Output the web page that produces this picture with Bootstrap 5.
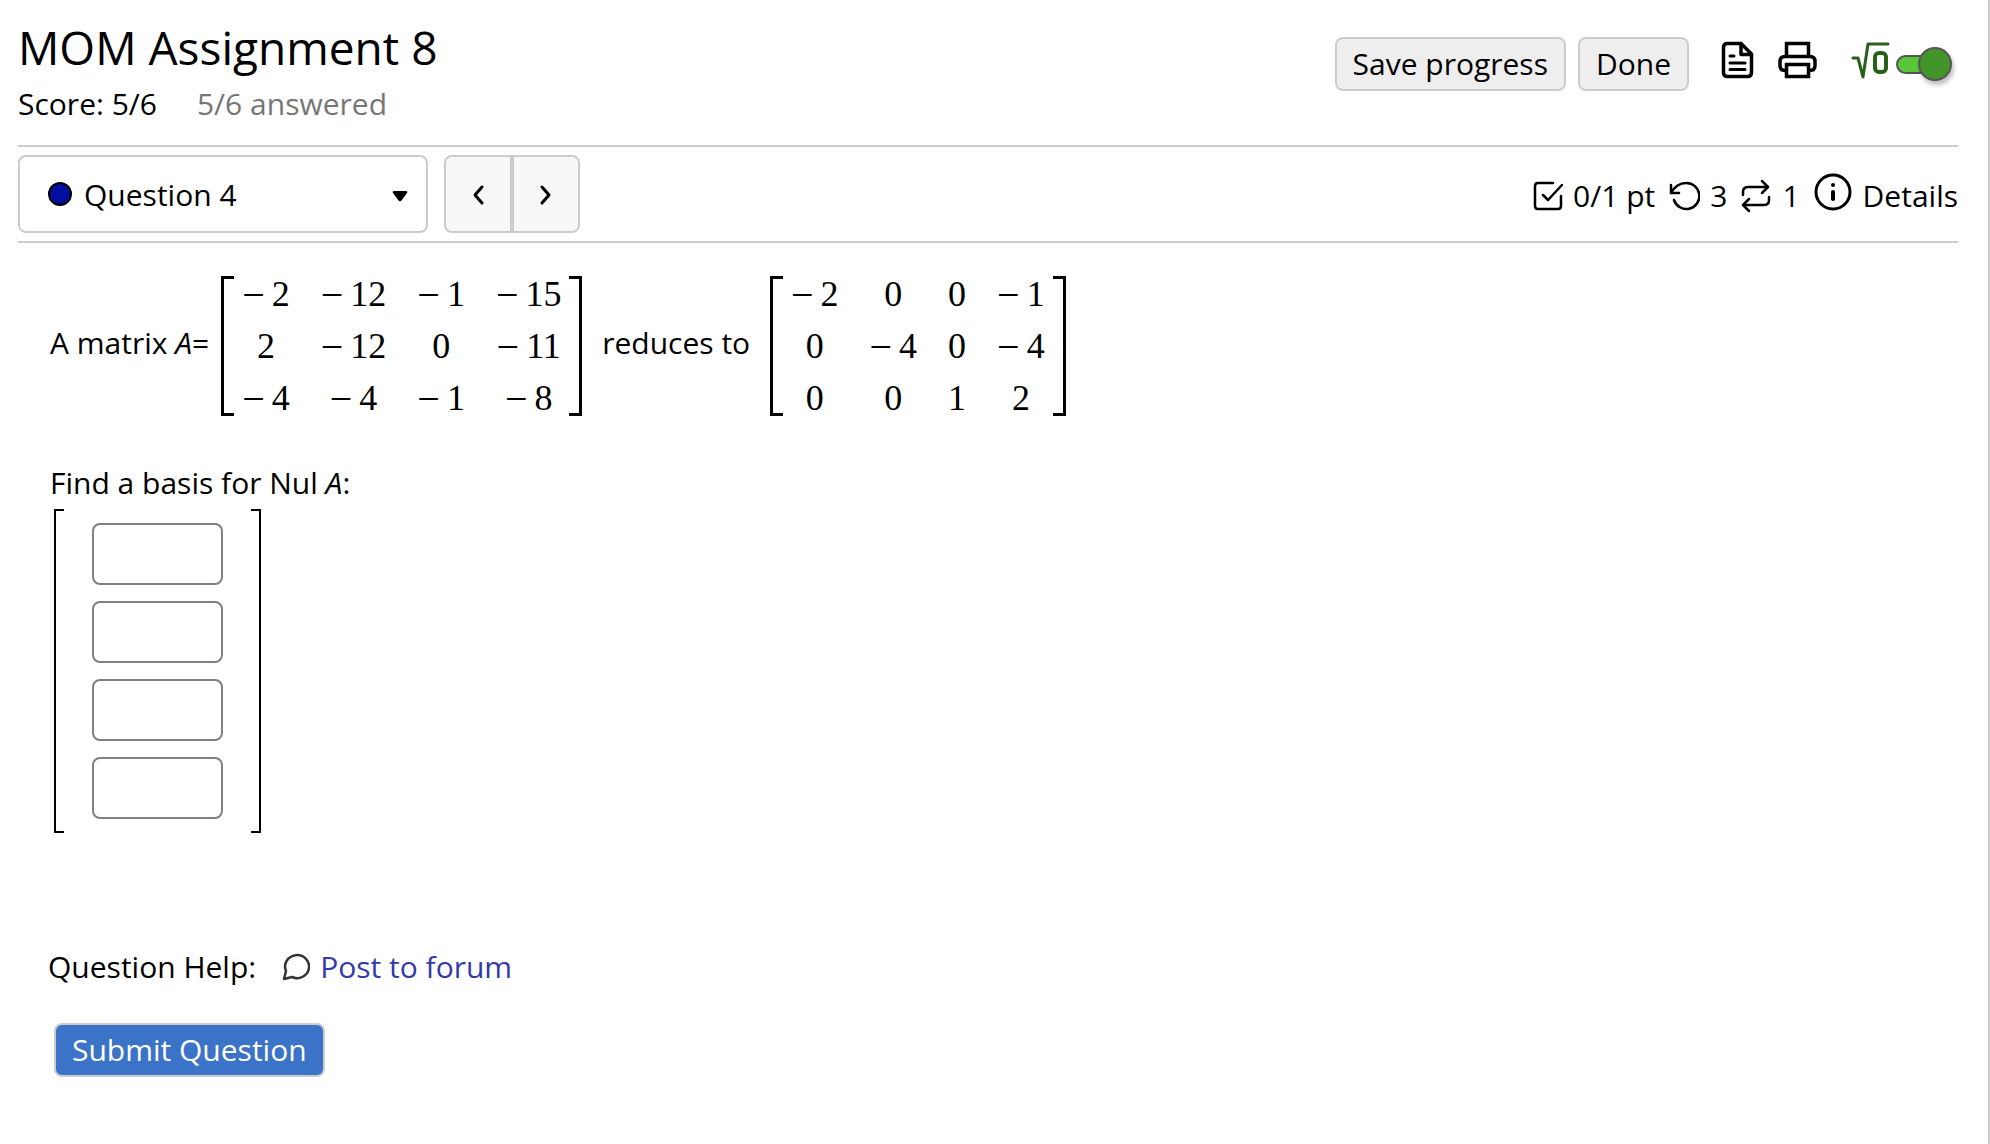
<!DOCTYPE html>
<html lang="en">
<head>
<meta charset="utf-8">
<meta name="viewport" content="width=device-width, initial-scale=1">
<title>MOM Assignment 8</title>
<link href="https://cdn.jsdelivr.net/npm/bootstrap@5.3.0/dist/css/bootstrap.min.css" rel="stylesheet">
<style>
  body { font-family: "Open Sans", "Noto Sans", sans-serif; font-size: 30px; line-height: 40px; color: #000; background: #fff; }
  .page { border-right: 2px solid #ccc; padding: 15px 30px 0 18px; }
  .page-title { font-size: 46px; line-height: 64px; }
  .rule-bottom { border-bottom: 2px solid #ccc; }
  .head { padding-bottom: 21px; }
  .head-tools { padding-top: 22px; gap: 12px; }
  .score-row { gap: 40px; margin-top: 5px; }
  .muted-count { color: #767676; }
  .action-btn { font-size: 30px; line-height: 40px; padding: 5px 16px; color: #000; background: #eee; border: 2px solid #ccc; border-radius: 8px; }
  .action-btn:hover { background: #ddd; border-color: #bbb; }
  .action-main, .action-main:hover { color: #fff; background: #3b73c9; border-color: #ccc; }
  .tool-icons { gap: 20px; margin-left: 16px; padding-bottom: 8px; }
  .math-toggle { gap: 6px; margin: 0 6px 0 13px; }
  .math-switch { appearance: none; width: 56px; height: 34px; margin: 8px 0 0; display: flex; align-items: center; }
  .math-switch::before { content: ""; width: 44px; height: 19px; border: 2px solid #555; border-radius: 10px; background: #5ac73a; }
  .math-switch::after { content: ""; width: 34px; height: 34px; margin-left: -22px; flex: none; border: 2px solid #555; border-radius: 50%; background: #43952a; box-shadow: 2px 4px 4px rgba(0,0,0,.25); }
  .nav-row { padding: 8px 0; }
  .picker { width: 410px; }
  .picker-dot { left: 30px; top: 27px; width: 24px; height: 24px; border: 2px solid #000; border-radius: 50%; background: #000f9f; pointer-events: none; }
  .picker-select { height: 78px; font-size: 30px; color: #000; padding: 0 50px 0 64px; border: 2px solid #ccc; border-radius: 8px;
    background-image: url("data:image/svg+xml,%3Csvg xmlns='http://www.w3.org/2000/svg' viewBox='0 0 16 12'%3E%3Cpath d='M2 1h12q2 0 1 2l-5.500 7.500q-1.500 1.500-3 0L1 3q-1-2 1-2z'/%3E%3C/svg%3E"); background-size: 16px 12px; background-position: right 18px top 33px; }
  .step-btn { width: 68px; height: 78px; border: 2px solid #ccc; border-radius: 8px; background: #f8f8f8; padding: 0; }
  .info-item { gap: 10px; }
  .info-row { gap: 13px; padding-top: 4px; }
  .info-icon { margin-bottom: 8px; }
  .question { padding: 33px 0 0 32px; }
  .statement { gap: 12px; }
  .statement-text { padding-bottom: 6px; }
  .bracketed { gap: 8px; }
  .bracket-open, .bracket-close { width: 13px; border: 3px solid #000; }
  .bracket-open { border-right: 0; }
  .bracket-close { border-left: 0; }
  .matrix { font-family: "Liberation Serif", serif; font-size: 36px; line-height: 52px; text-align: center; margin: -8px 0; }
  .matrix td { padding: 0 0 0 31px; white-space: nowrap; }
  .matrix td:first-child { padding-left: 0; }
  .matrix tr { height: 52px; }
  .minus { font-size: 40px; line-height: 36px; margin-right: 7px; vertical-align: -2px; }
  .prompt { margin-top: 47px; }
  .answer { gap: 28px; margin: 6px 0 0 4px; }
  .answer .bracket-open, .answer .bracket-close { width: 10px; border-width: 2px; }
  .answer-cells { gap: 16px; padding: 14px 0; }
  .answer-input { width: 131px; height: 62px; font-size: 30px; color: #000; border: 2px solid #808080; border-radius: 8px; }
  .help { gap: 10px; margin: 114px 0 0 -2px; }
  .help-label { margin-right: 16px; }
  .help a { color: #343aa8; text-decoration: none; }
  .submit-wrap { margin: 36px 0 0 4px; }
</style>
<script src="https://cdn.jsdelivr.net/npm/bootstrap@5.3.0/dist/js/bootstrap.bundle.min.js"></script>
</head>
<body>
<div class="page min-vh-100">
  <header class="head rule-bottom d-flex justify-content-between align-items-start">
    <div>
      <h1 class="page-title fw-normal m-0">MOM Assignment 8</h1>
      <div class="score-row d-flex"><span>Score: 5/6</span><span class="muted-count">5/6 answered</span></div>
    </div>
    <div class="head-tools d-flex align-items-center">
      <button type="button" class="btn action-btn">Save progress</button>
      <button type="button" class="btn action-btn">Done</button>
      <div class="tool-icons d-flex align-items-center">
        <a href="#" aria-label="Assignment text" class="d-flex"><svg width="40" height="40" viewBox="0 0 40 40" fill="none" stroke="#000" stroke-width="3.500" stroke-linejoin="round" stroke-linecap="round"><path d="M24 3.500H10.500q-4 0-4 4v25q0 4 4 4h20q4 0 4-4V14z"/><path d="M24 3.500V14.500h10.500"/><path d="M13 16h4M13 23h15M13 29.500h15" stroke-width="3"/></svg></a>
        <a href="#" aria-label="Print" class="d-flex"><svg width="40" height="40" viewBox="0 0 40 40" fill="none" stroke="#000" stroke-width="3.500" stroke-linejoin="round" stroke-linecap="round"><path d="M9.500 16V3.500h22V16" stroke-linejoin="miter"/><path d="M9 30.500H8q-5 0-5-5v-4q0-5 5-5h25q5 0 5 5v4q0 5-5 5h-1"/><path d="M9.500 24.500h22v12h-22z" stroke-linejoin="miter"/></svg></a>
        <div class="math-toggle d-flex align-items-center">
          <svg width="40" height="40" viewBox="0 0 40 40" fill="none" stroke="#266019" stroke-width="4" stroke-linejoin="round" stroke-linecap="round" aria-hidden="true"><path d="M3 18h5l5 19 5-33h20" stroke-width="3"/><rect x="25" y="13" width="11" height="19" rx="4"/></svg>
          <input type="checkbox" class="math-switch" role="switch" aria-label="Equation editor" checked>
        </div>
      </div>
    </div>
  </header>
  <nav class="nav-row rule-bottom d-flex align-items-center justify-content-between" aria-label="Questions">
    <div class="d-flex gap-3">
      <div class="picker position-relative">
        <select class="form-select picker-select" aria-label="Question"><option>Question 4</option></select>
        <span class="picker-dot position-absolute"></span>
      </div>
      <div class="btn-group">
        <button type="button" class="btn step-btn" aria-label="Previous question"><svg width="14" height="22" viewBox="0 0 14 22" fill="none" stroke="#000" stroke-width="3" stroke-linecap="round" stroke-linejoin="round"><path d="M11 3L4 11l7 8"/></svg></button>
        <button type="button" class="btn step-btn m-0" aria-label="Next question"><svg width="14" height="22" viewBox="0 0 14 22" fill="none" stroke="#000" stroke-width="3" stroke-linecap="round" stroke-linejoin="round"><path d="M3 3l7 8-7 8"/></svg></button>
      </div>
    </div>
    <div class="info-row d-flex align-items-center">
      <span class="info-item d-flex align-items-center"><svg width="30" height="30" viewBox="0 0 30 30" fill="none" stroke="#000" stroke-width="2.500" stroke-linecap="round" stroke-linejoin="round"><path d="M20 2H5Q2 2 2 5v20q0 3 3 3h20q3 0 3-3V15"/><path d="M10 14l5 5L29 4"/></svg>0/1 pt</span>
      <span class="info-item d-flex align-items-center"><svg width="32" height="30" viewBox="0 0 32 30" fill="none" stroke="#000" stroke-width="2.500" stroke-linecap="round" stroke-linejoin="round"><path d="M3 4v8h8"/><path d="M3 12C7 5 12 2 18 2a13 13 0 1 1-12 17"/></svg>3</span>
      <span class="info-item d-flex align-items-center"><svg width="32" height="34" viewBox="0 0 32 34" fill="none" stroke="#000" stroke-width="2.500" stroke-linecap="round" stroke-linejoin="round"><path d="M3 16v-3q0-5 5-5h20"/><path d="M22 2l6 6-6 6"/><path d="M29 18v3q0 5-5 5H4"/><path d="M9 20l-6 6 6 6"/></svg>1</span>
      <span class="info-item d-flex align-items-center"><svg class="info-icon" width="40" height="38" viewBox="0 0 40 38" fill="none" stroke="#000" stroke-width="3"><circle cx="20" cy="19" r="17"/><path d="M20 19v7" stroke-width="4" stroke-linecap="round"/><circle cx="20" cy="12" r="2" fill="#000" stroke="none"/></svg>Details</span>
    </div>
  </nav>
  <main class="question">
    <div class="statement d-flex align-items-center">
      <span class="statement-text">A matrix <i>A</i>=</span>
      <div class="bracketed d-flex">
        <span class="bracket-open"></span>
        <table class="matrix">
          <tr><td><span class="minus">−</span>2</td><td><span class="minus">−</span>12</td><td><span class="minus">−</span>1</td><td><span class="minus">−</span>15</td></tr>
          <tr><td>2</td><td><span class="minus">−</span>12</td><td>0</td><td><span class="minus">−</span>11</td></tr>
          <tr><td><span class="minus">−</span>4</td><td><span class="minus">−</span>4</td><td><span class="minus">−</span>1</td><td><span class="minus">−</span>8</td></tr>
        </table>
        <span class="bracket-close"></span>
      </div>
      <span class="statement-text">&nbsp;reduces to&nbsp;</span>
      <div class="bracketed d-flex">
        <span class="bracket-open"></span>
        <table class="matrix">
          <tr><td><span class="minus">−</span>2</td><td>0</td><td>0</td><td><span class="minus">−</span>1</td></tr>
          <tr><td>0</td><td><span class="minus">−</span>4</td><td>0</td><td><span class="minus">−</span>4</td></tr>
          <tr><td>0</td><td>0</td><td>1</td><td>2</td></tr>
        </table>
        <span class="bracket-close"></span>
      </div>
    </div>
    <p class="prompt mb-0">Find a basis for Nul <i>A</i>:</p>
    <div class="answer d-flex">
      <span class="bracket-open"></span>
      <div class="answer-cells d-flex flex-column">
        <input type="text" class="form-control answer-input" aria-label="Entry 1">
        <input type="text" class="form-control answer-input" aria-label="Entry 2">
        <input type="text" class="form-control answer-input" aria-label="Entry 3">
        <input type="text" class="form-control answer-input" aria-label="Entry 4">
      </div>
      <span class="bracket-close"></span>
    </div>
    <div class="help d-flex align-items-center">
      <span class="help-label">Question Help:</span>
      <svg width="28" height="28" viewBox="0 0 28 28" fill="none" stroke="#333" stroke-width="2.500" stroke-linejoin="round" aria-hidden="true"><path d="M2 26l2-8A12 11.500 0 1 1 10 24z"/></svg>
      <a href="#">Post to forum</a>
    </div>
    <div class="submit-wrap"><button type="button" class="btn action-btn action-main">Submit Question</button></div>
  </main>
</div>
</body>
</html>
